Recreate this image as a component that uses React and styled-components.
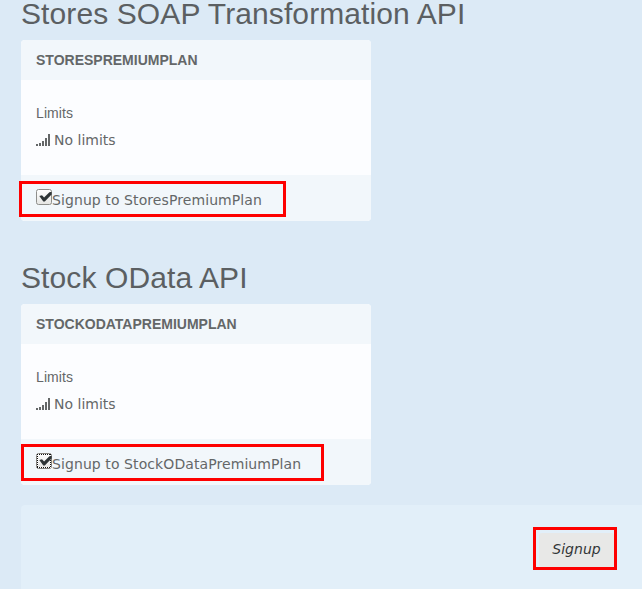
import React from "react";
import styled, { createGlobalStyle } from "styled-components";

const GlobalStyle = createGlobalStyle`
  * { box-sizing: border-box; }
  html, body { margin: 0; background: #dceaf6; overflow: hidden; }
  body { font: 14px/20px "DejaVu Sans", sans-serif; color: #646768; }
`;

const Page = styled.main`
  display: flex;
  flex-direction: column;
  width: 642px;
  height: 589px;
  padding-left: 21px;
  overflow: hidden;
`;

const Section = styled.section`
  display: flex;
  flex-direction: column;
  height: ${(p) => p.$height}px;
  flex: none;
`;

const Title = styled.h2`
  margin: 0;
  height: ${(p) => p.$height}px;
  flex: none;
  display: flex;
  align-items: flex-end;
  padding-bottom: 12px;
  font: 400 30px/28px "Liberation Sans", sans-serif;
  letter-spacing: 0.1px;
  color: #5b5f62;
  white-space: nowrap;
`;

const Card = styled.article`
  width: 350px;
  border-radius: 4px;
  background: #fcfdff;
`;

const CardHeader = styled.h3`
  margin: 0;
  height: 40px;
  padding: 0 15px;
  border-radius: 4px 4px 0 0;
  background: #f2f7fb;
  font: 700 14px/40px "Liberation Sans", sans-serif;
  text-transform: uppercase;
`;

const CardBody = styled.div`
  height: 95px;
  padding: 23px 15px 0;
`;

const LimitsLabel = styled.div`
  font: 14px/20px "Liberation Sans", sans-serif;
  letter-spacing: 0.1px;
  margin-bottom: 7px;
`;

const LimitRow = styled.div`
  display: flex;
  align-items: center;
  gap: 4px;
  height: 20px;
`;

const CardFooter = styled.div`
  position: relative;
  height: 46px;
  padding: 14px 15px 0;
  border-radius: 0 0 4px 4px;
  background: #f2f7fb;
`;

const CheckLabel = styled.label`
  display: flex;
  white-space: nowrap;
  line-height: 22px;
  letter-spacing: 0.085px;
`;

const Highlight = styled.div`
  position: absolute;
  left: ${(p) => p.$left}px;
  top: ${(p) => p.$top}px;
  width: ${(p) => p.$width}px;
  height: ${(p) => p.$height}px;
  border: 3px solid #fe0000;
  pointer-events: none;
`;

const ActionBar = styled.footer`
  display: flex;
  justify-content: flex-end;
  align-items: flex-start;
  flex: 1;
  padding: 28px 28px 0 0;
  border-radius: 4px 0 0 0;
  background: #e2eff9;
`;

const ActionWrap = styled.div`
  position: relative;
`;

const SignupButton = styled.button`
  display: block;
  width: 75px;
  height: 34px;
  padding: 0 0 2px;
  border: 0;
  border-radius: 3px;
  background: #e8e8e7;
  color: #333638;
  font: italic 14px/32px "DejaVu Sans", sans-serif;
`;

const Icon = styled.svg`
  display: block;
  flex: none;
`;

const SignalIcon = () => (
  <Icon width="14" height="12" viewBox="0 0 14 12" fill="#646768" shapeRendering="crispEdges">
    <path d="M0 10h2v2H0zM3 9h2v3H3zM6 7h2v5H6zM9 4h2v8H9zM12 0h2v12h-2z" />
  </Icon>
);

const CheckIcon = ({ focused }) => (
  <Icon width="16" height="16" viewBox="0 0 16 16">
    <defs>
      <linearGradient id="box-fill" x2="0" y2="1">
        <stop stopColor="#ffffff" />
        <stop offset="1" stopColor="#e5e5e3" />
      </linearGradient>
    </defs>
    <rect x=".5" y=".5" width="15" height="15" rx="2" fill="url(#box-fill)" stroke={focused ? "#85837e" : "#8e8e8b"} />
    {focused && (
      <g fill="none" shapeRendering="crispEdges">
        <rect x="1.5" y="1.5" width="13" height="13" stroke="#fff" />
        <path d="M1 1.5h14M1 14.5h14M1.5 1v14M14.5 1v14" stroke="#111" strokeDasharray="1 1" />
      </g>
    )}
    <path d="M3.3 7 6 6.2 8.1 8.6 13.4 3.2 15.6 2.8V5.4L8.8 12.6H7.3z" fill="#2e3436" />
  </Icon>
);

function Plan({ title, name, height, titleHeight, focused, highlight }) {
  return (
    <Section $height={height}>
      <Title $height={titleHeight}>{title}</Title>
      <Card>
        <CardHeader>{name}</CardHeader>
        <CardBody>
          <LimitsLabel>Limits</LimitsLabel>
          <LimitRow>
            <SignalIcon />
            <span>No limits</span>
          </LimitRow>
        </CardBody>
        <CardFooter>
          <CheckLabel>
            <CheckIcon focused={focused} />
            <span>Signup to {name}</span>
          </CheckLabel>
          <Highlight {...highlight} />
        </CardFooter>
      </Card>
    </Section>
  );
}

export default function App() {
  return (
    <>
      <GlobalStyle />
      <Page>
        <Plan
          title="Stores SOAP Transformation API"
          name="StoresPremiumPlan"
          height={241}
          titleHeight={40}
          highlight={{ $left: -2, $top: 6, $width: 267, $height: 36 }}
        />
        <Plan
          title="Stock OData API"
          name="StockODataPremiumPlan"
          height={264}
          titleHeight={63}
          focused
          highlight={{ $left: 0, $top: 5, $width: 303, $height: 37 }}
        />
        <ActionBar>
          <ActionWrap>
            <SignupButton type="button">Signup</SignupButton>
            <Highlight $left={-6} $top={-6} $width={84} $height={43} />
          </ActionWrap>
        </ActionBar>
      </Page>
    </>
  );
}
